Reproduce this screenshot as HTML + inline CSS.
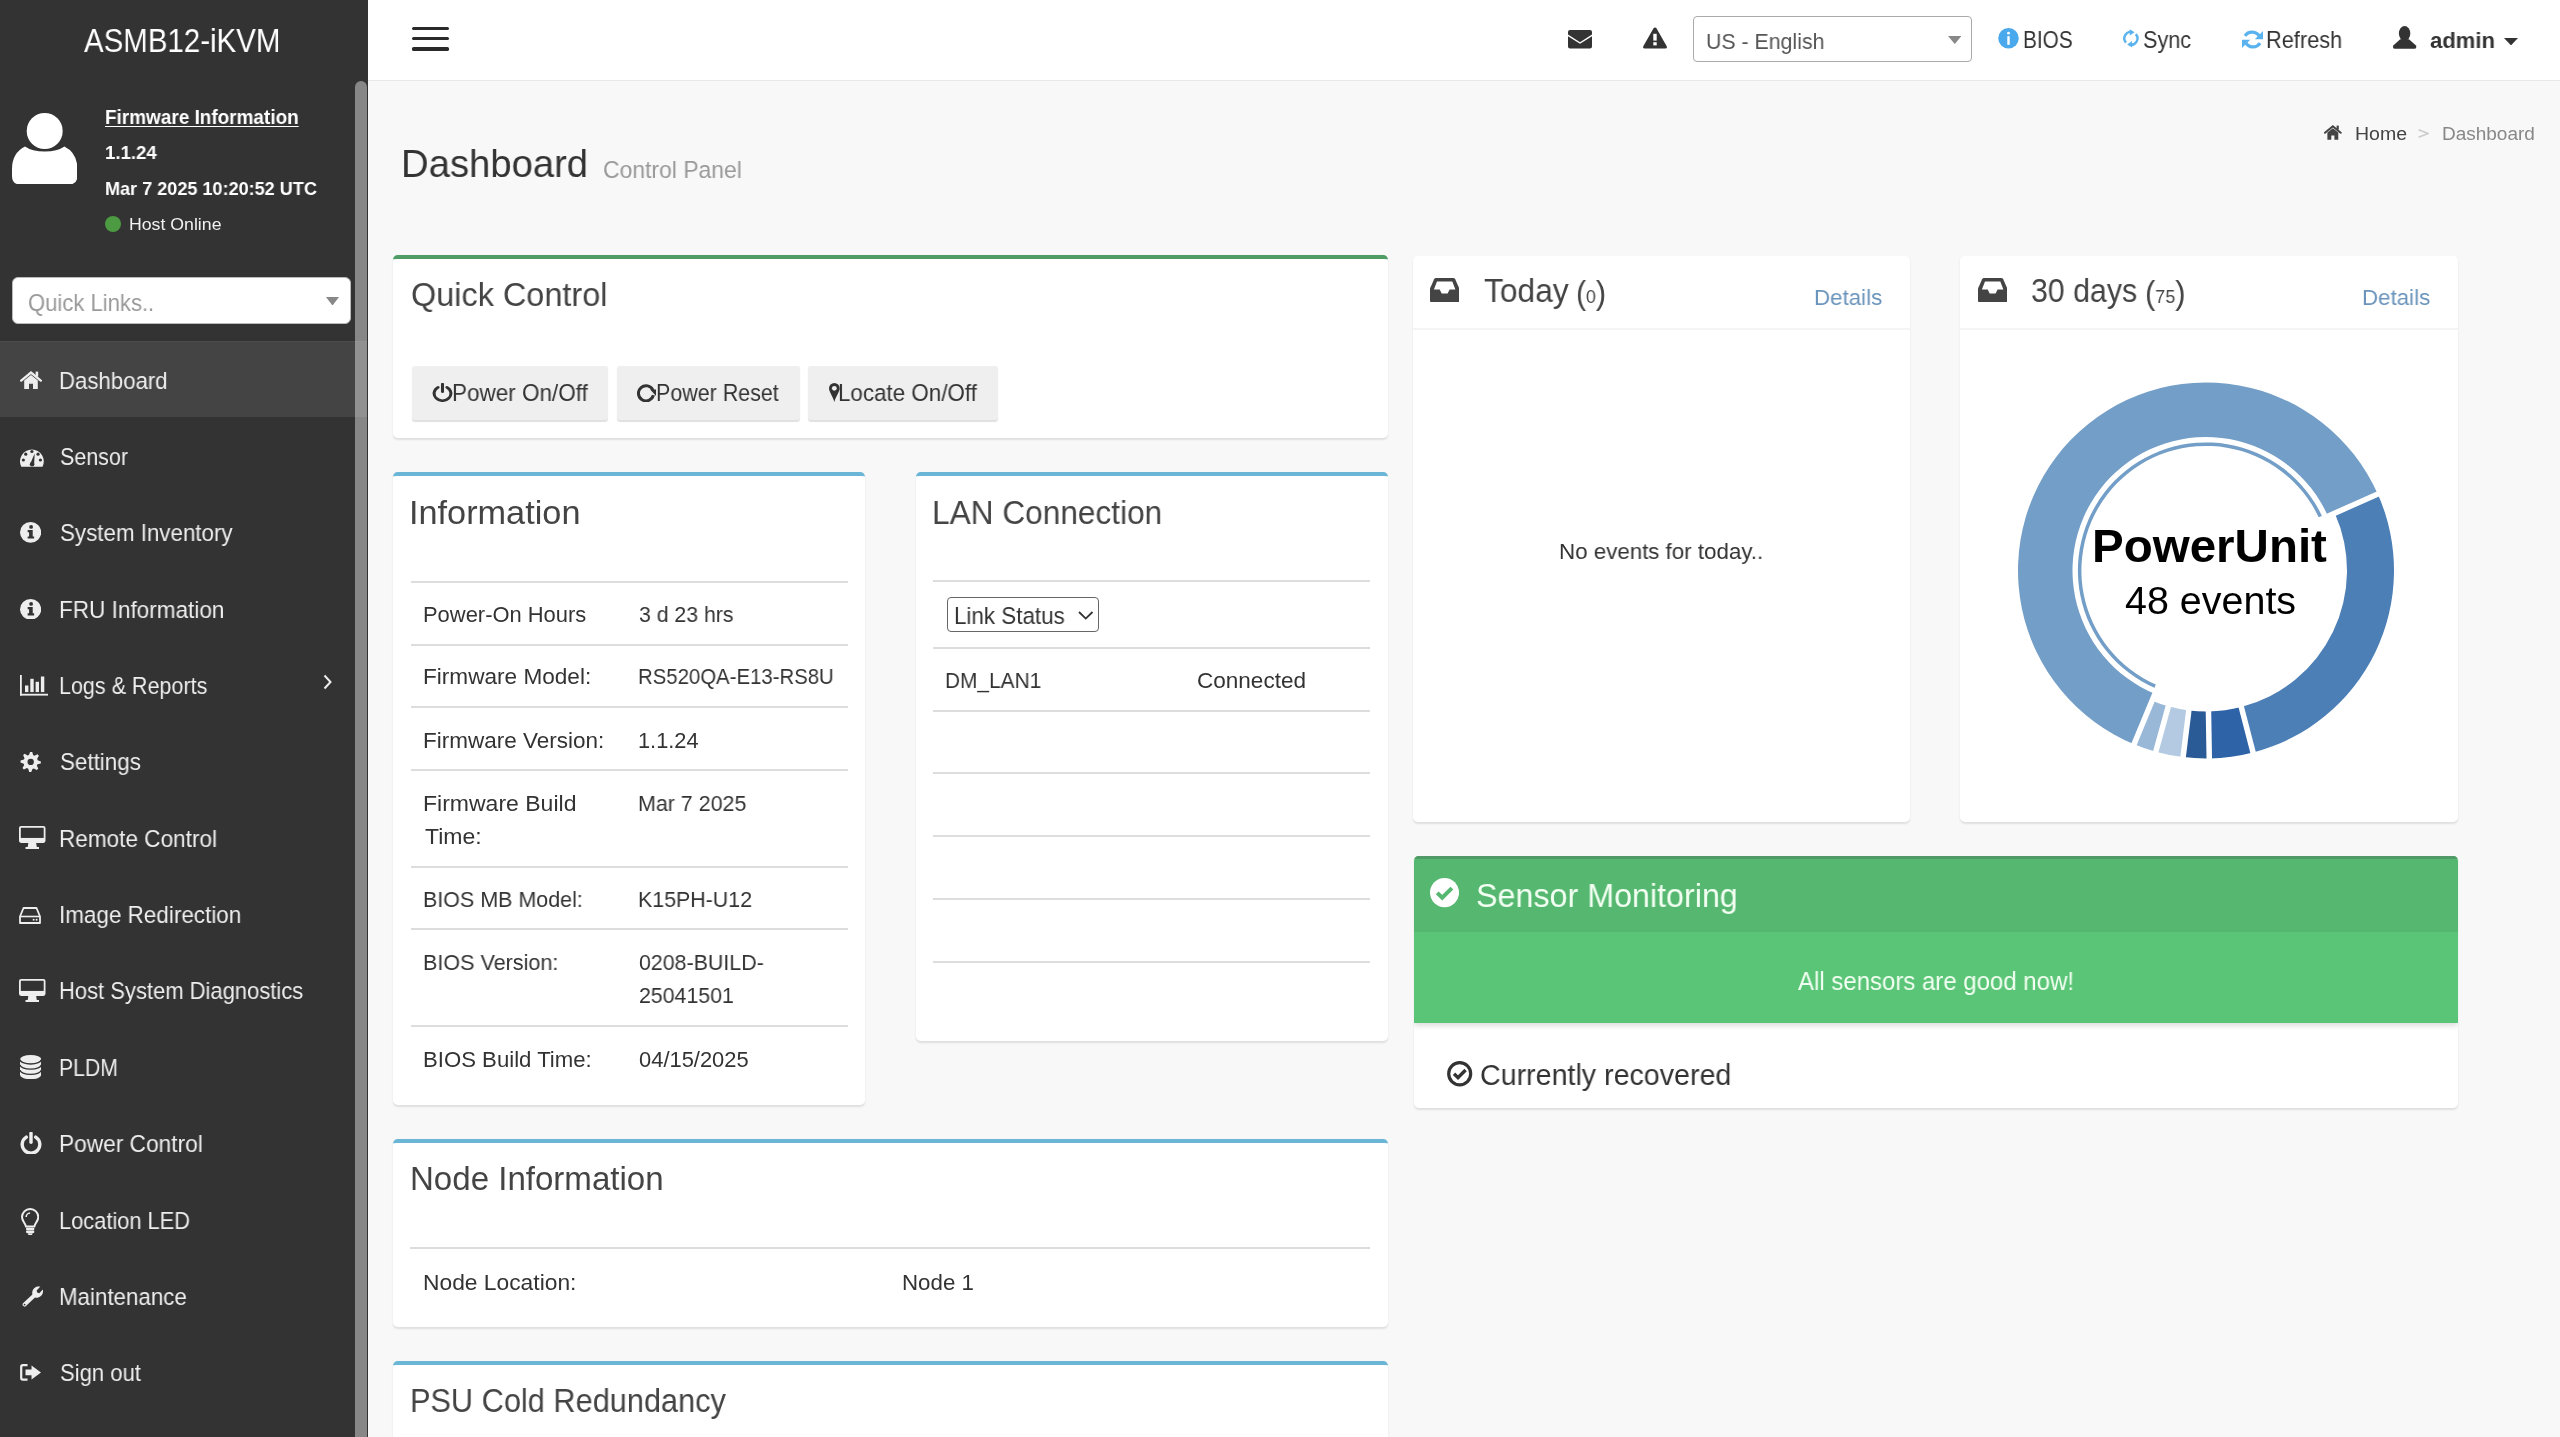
<!DOCTYPE html>
<html><head><meta charset="utf-8"><title>Dashboard</title>
<style>
html,body{margin:0;padding:0;}
body{width:2560px;height:1437px;overflow:hidden;position:relative;background:#f8f8f8;font-family:"Liberation Sans",sans-serif;}
.r{position:absolute;display:block;}
.t{position:absolute;white-space:nowrap;will-change:transform;}
</style></head><body>
<div class="r" style="left:0.00px;top:0.00px;width:368.00px;height:1437.00px;background:#333333;"></div>
<div class="r" style="left:0.00px;top:341.00px;width:366.50px;height:76.00px;background:#444444;"></div>
<div class="r" style="left:0.00px;top:341.00px;width:366.50px;height:1.20px;background:#4b4b4b;"></div>
<div class="r" style="left:354.80px;top:81.00px;width:12.40px;height:1356.00px;background:rgba(255,255,255,0.41);border-radius:6px 6px 0 0;"></div>
<div class="t " id="t0" style="left:84.20px;top:23.40px;font-size:34.01px;line-height:34.01px;color:#ffffff;font-weight:400;transform:scaleX(0.8661);transform-origin:0 0;">ASMB12-iKVM</div>
<svg class="r" style="left:11.90px;top:112.60px;width:65.40px;height:71.50px;" viewBox="0 0 65.4 71.5" preserveAspectRatio="none"><circle cx="32.7" cy="18" r="18" fill="#fff"/><path d="M13,33.5 Q20,38.5 32.7,38.5 Q45.4,38.5 52.4,33.5 Q65.4,40 65.4,56 L65.4,63 Q65.4,71.5 57,71.5 L8.4,71.5 Q0,71.5 0,63 L0,56 Q0,40 13,33.5 Z" fill="#fff"/></svg>
<div class="t " id="t1" style="left:104.60px;top:108.26px;font-size:19.77px;line-height:19.77px;color:#ffffff;font-weight:700;transform:scaleX(0.9585);transform-origin:0 0;text-decoration:underline;text-underline-offset:2px;text-decoration-thickness:1.3px;">Firmware Information</div>
<div class="t " id="t2" style="left:104.60px;top:144.40px;font-size:18.90px;line-height:18.90px;color:#ffffff;font-weight:700;transform:scaleX(0.9849);transform-origin:0 0;">1.1.24</div>
<div class="t " id="t3" style="left:104.60px;top:180.05px;font-size:18.60px;line-height:18.60px;color:#ffffff;font-weight:700;transform:scaleX(0.9717);transform-origin:0 0;">Mar 7 2025 10:20:52 UTC</div>
<div class="r" style="left:105px;top:216px;width:16px;height:16px;border-radius:50%;background:#4c9a41;"></div>
<div class="t " id="t4" style="left:129.40px;top:217.32px;font-size:16.86px;line-height:16.86px;color:#f2f2f2;font-weight:400;transform:scaleX(1.0498);transform-origin:0 0;">Host Online</div>
<div class="r" style="left:12px;top:277px;width:337px;height:45px;border-radius:6px;background:#fff;border:1px solid #bbb;"></div>
<div class="t " id="t5" style="left:27.60px;top:292.13px;font-size:23.11px;line-height:23.11px;color:#999999;font-weight:400;transform:scaleX(0.9542);transform-origin:0 0;">Quick Links..</div>
<svg class="r" style="left:325.90px;top:296.90px;width:13.00px;height:8.60px;" viewBox="0 0 13 8.6" preserveAspectRatio="none"><path d="M0,0 L13,0 L6.5,8.6 Z" fill="#888"/></svg>
<div class="t " id="t6" style="left:59.00px;top:369.51px;font-size:23.26px;line-height:23.26px;color:#eeeeee;font-weight:400;transform:scaleX(0.9546);transform-origin:0 0;">Dashboard</div>
<div class="t " id="t7" style="left:60.00px;top:445.88px;font-size:23.26px;line-height:23.26px;color:#eeeeee;font-weight:400;transform:scaleX(0.9237);transform-origin:0 0;">Sensor</div>
<div class="t " id="t8" style="left:60.00px;top:522.25px;font-size:23.26px;line-height:23.26px;color:#eeeeee;font-weight:400;transform:scaleX(0.9609);transform-origin:0 0;">System Inventory</div>
<div class="t " id="t9" style="left:59.00px;top:598.62px;font-size:23.26px;line-height:23.26px;color:#eeeeee;font-weight:400;transform:scaleX(0.9700);transform-origin:0 0;">FRU Information</div>
<div class="t " id="t10" style="left:59.00px;top:674.99px;font-size:23.26px;line-height:23.26px;color:#eeeeee;font-weight:400;transform:scaleX(0.9253);transform-origin:0 0;">Logs & Reports</div>
<div class="t " id="t11" style="left:60.00px;top:751.36px;font-size:23.26px;line-height:23.26px;color:#eeeeee;font-weight:400;transform:scaleX(0.9623);transform-origin:0 0;">Settings</div>
<div class="t " id="t12" style="left:59.00px;top:827.73px;font-size:23.26px;line-height:23.26px;color:#eeeeee;font-weight:400;transform:scaleX(0.9704);transform-origin:0 0;">Remote Control</div>
<div class="t " id="t13" style="left:59.00px;top:904.10px;font-size:23.26px;line-height:23.26px;color:#eeeeee;font-weight:400;transform:scaleX(0.9659);transform-origin:0 0;">Image Redirection</div>
<div class="t " id="t14" style="left:59.00px;top:980.47px;font-size:23.26px;line-height:23.26px;color:#eeeeee;font-weight:400;transform:scaleX(0.9450);transform-origin:0 0;">Host System Diagnostics</div>
<div class="t " id="t15" style="left:59.00px;top:1056.84px;font-size:23.26px;line-height:23.26px;color:#eeeeee;font-weight:400;transform:scaleX(0.9116);transform-origin:0 0;">PLDM</div>
<div class="t " id="t16" style="left:59.00px;top:1133.21px;font-size:23.26px;line-height:23.26px;color:#eeeeee;font-weight:400;transform:scaleX(0.9758);transform-origin:0 0;">Power Control</div>
<div class="t " id="t17" style="left:59.00px;top:1209.58px;font-size:23.26px;line-height:23.26px;color:#eeeeee;font-weight:400;transform:scaleX(0.9387);transform-origin:0 0;">Location LED</div>
<div class="t " id="t18" style="left:59.00px;top:1285.95px;font-size:23.26px;line-height:23.26px;color:#eeeeee;font-weight:400;transform:scaleX(0.9600);transform-origin:0 0;">Maintenance</div>
<div class="t " id="t19" style="left:60.00px;top:1362.32px;font-size:23.26px;line-height:23.26px;color:#eeeeee;font-weight:400;transform:scaleX(0.9489);transform-origin:0 0;">Sign out</div>
<svg class="r" style="left:20.20px;top:371.00px;width:22.00px;height:18.00px;" viewBox="0 0 22 18" preserveAspectRatio="none"><path d="M1.2,9.6 L11,1.6 L20.8,9.6" stroke="#eeeeee" stroke-width="2.4" fill="none" stroke-linecap="round"/><rect x="15.6" y="0.6" width="2.6" height="5" fill="#eeeeee"/><path d="M4.2,9.4 L11,4 L17.8,9.4 L17.8,18 L13,18 L13,12.8 L9,12.8 L9,18 L4.2,18 Z" fill="#eeeeee"/></svg>
<svg class="r" style="left:20.20px;top:448.00px;width:23.80px;height:18.70px;" viewBox="0 0 24 19" preserveAspectRatio="none"><path d="M1.3,19 A12,12 0 1 1 22.7,19 Z" fill="#eeeeee"/><circle cx="12" cy="3.6" r="1.6" fill="#333"/><circle cx="5.8" cy="6.3" r="1.6" fill="#333"/><circle cx="18.2" cy="6.3" r="1.6" fill="#333"/><circle cx="3.4" cy="12.2" r="1.6" fill="#333"/><circle cx="20.6" cy="12.2" r="1.6" fill="#333"/><path d="M10.2,16.2 L14.8,5.6 L14.2,17 Z" fill="#333"/><circle cx="12.2" cy="16.5" r="2.3" fill="#333"/></svg>
<svg class="r" style="left:19.90px;top:522.30px;width:21.20px;height:20.70px;" viewBox="0 0 21 21" preserveAspectRatio="none"><circle cx="10.5" cy="10.5" r="10.5" fill="#eeeeee"/><circle cx="11" cy="5" r="1.9" fill="#333"/><path d="M7.6,8.2 L12.6,8.2 L12.6,14.6 L14,14.6 L14,16.8 L7.6,16.8 L7.6,14.6 L9,14.6 L9,10.4 L7.6,10.4 Z" fill="#333"/></svg>
<svg class="r" style="left:19.90px;top:598.60px;width:21.20px;height:20.60px;" viewBox="0 0 21 21" preserveAspectRatio="none"><circle cx="10.5" cy="10.5" r="10.5" fill="#eeeeee"/><circle cx="11" cy="5" r="1.9" fill="#333"/><path d="M7.6,8.2 L12.6,8.2 L12.6,14.6 L14,14.6 L14,16.8 L7.6,16.8 L7.6,14.6 L9,14.6 L9,10.4 L7.6,10.4 Z" fill="#333"/></svg>
<svg class="r" style="left:19.90px;top:675.00px;width:28.20px;height:20.60px;" viewBox="0 0 28.2 20.6" preserveAspectRatio="none"><rect x="0" y="0" width="1.8" height="20.6" fill="#eeeeee"/><rect x="0" y="18.8" width="28.2" height="1.8" fill="#eeeeee"/><rect x="5" y="10.5" width="3.4" height="6.6" fill="#eeeeee"/><rect x="10.3" y="3.8" width="3.4" height="13.3" fill="#eeeeee"/><rect x="15.6" y="6.8" width="3.4" height="10.3" fill="#eeeeee"/><rect x="20.9" y="1.5" width="3.4" height="15.6" fill="#eeeeee"/></svg>
<svg class="r" style="left:323.00px;top:674.00px;width:9.00px;height:16.00px;" viewBox="0 0 9 16" preserveAspectRatio="none"><path d="M1.5,1.5 L7.5,8 L1.5,14.5" stroke="#eeeeee" stroke-width="2" fill="none"/></svg>
<svg class="r" style="left:19.90px;top:752.00px;width:21.40px;height:19.80px;" viewBox="0 0 21.4 19.8" preserveAspectRatio="none"><polygon points="10.20,-0.29 12.20,-0.19 13.13,3.12 14.40,3.72 17.55,2.34 18.89,3.82 17.21,6.82 17.68,8.15 20.89,9.40 20.79,11.40 17.48,12.33 16.88,13.60 18.26,16.75 16.78,18.09 13.78,16.41 12.45,16.88 11.20,20.09 9.20,19.99 8.27,16.68 7.00,16.08 3.85,17.46 2.51,15.98 4.19,12.98 3.72,11.65 0.51,10.40 0.61,8.40 3.92,7.47 4.52,6.20 3.14,3.05 4.62,1.71 7.62,3.39 8.95,2.92" fill="#eeeeee"/><circle cx="10.70" cy="9.90" r="3.20" fill="#333"/></svg>
<svg class="r" style="left:19.20px;top:825.70px;width:26.50px;height:22.90px;" viewBox="0 0 26.5 23" preserveAspectRatio="none"><rect x="0.9" y="0.9" width="24.7" height="15.2" rx="1.2" fill="none" stroke="#eeeeee" stroke-width="1.8"/><rect x="0.9" y="12" width="24.7" height="4" fill="#eeeeee"/><path d="M9.5,16 L17,16 L17.8,21 L20,21 L20,23 L6.5,23 L6.5,21 L8.7,21 Z" fill="#eeeeee"/></svg>
<svg class="r" style="left:19.20px;top:979.00px;width:26.50px;height:22.90px;" viewBox="0 0 26.5 23" preserveAspectRatio="none"><rect x="0.9" y="0.9" width="24.7" height="15.2" rx="1.2" fill="none" stroke="#eeeeee" stroke-width="1.8"/><rect x="0.9" y="12" width="24.7" height="4" fill="#eeeeee"/><path d="M9.5,16 L17,16 L17.8,21 L20,21 L20,23 L6.5,23 L6.5,21 L8.7,21 Z" fill="#eeeeee"/></svg>
<svg class="r" style="left:19.20px;top:907.00px;width:22.00px;height:17.00px;" viewBox="0 0 22 17" preserveAspectRatio="none"><path d="M4.5,1 L17.5,1 L21,9.5 L21,16 L1,16 L1,9.5 Z" fill="none" stroke="#eeeeee" stroke-width="1.8" stroke-linejoin="round"/><line x1="1" y1="9.5" x2="21" y2="9.5" stroke="#eeeeee" stroke-width="1.6"/><circle cx="14.6" cy="12.8" r="1" fill="#eeeeee"/><circle cx="17.6" cy="12.8" r="1" fill="#eeeeee"/></svg>
<svg class="r" style="left:20.00px;top:1055.00px;width:21.30px;height:24.20px;" viewBox="0 0 21.3 24.2" preserveAspectRatio="none"><path d="M0,4.4 A10.65,4.4 0 0 1 21.3,4.4 L21.3,19.8 A10.65,4.4 0 0 1 0,19.8 Z" fill="#eeeeee"/><path d="M0,4.6 A10.65,4.4 0 0 0 21.3,4.6 M0,9.8 A10.65,4.4 0 0 0 21.3,9.8 M0,15 A10.65,4.4 0 0 0 21.3,15" fill="none" stroke="#333" stroke-width="1.3"/></svg>
<svg class="r" style="left:19.60px;top:1131.80px;width:22.00px;height:22.70px;" viewBox="0 0 22 23" preserveAspectRatio="none"><path d="M6.3,5.2 A8.8,8.8 0 1 0 15.7,5.2" fill="none" stroke="#eeeeee" stroke-width="3.4" stroke-linecap="round"/><line x1="11" y1="1.3" x2="11" y2="10.5" stroke="#eeeeee" stroke-width="3.4" stroke-linecap="round"/></svg>
<svg class="r" style="left:20.60px;top:1207.70px;width:18.30px;height:27.50px;" viewBox="0 0 18.3 27.5" preserveAspectRatio="none"><path d="M9.15,1 A8.1,8.1 0 0 1 17.3,9.1 C17.3,13 14,15 13.3,18.5 L5,18.5 C4.3,15 1,13 1,9.1 A8.1,8.1 0 0 1 9.15,1 Z" fill="none" stroke="#eeeeee" stroke-width="2"/><path d="M5.2,9 A4,4 0 0 1 9.1,5" fill="none" stroke="#eeeeee" stroke-width="1.6"/><rect x="5" y="19.8" width="8.3" height="2.4" rx="1" fill="#eeeeee"/><rect x="5" y="22.6" width="8.3" height="2.4" rx="1" fill="#eeeeee"/><path d="M6.5,25.2 L11.8,25.2 Q11,27.5 9.15,27.5 Q7.3,27.5 6.5,25.2 Z" fill="#eeeeee"/></svg>
<svg class="r" style="left:20.60px;top:1286.00px;width:22.10px;height:21.50px;" viewBox="0 0 22.1 21.5" preserveAspectRatio="none"><path d="M2,17.2 L11.4,8.4 A6.5,6.5 0 0 1 19.4,0.6 L15.6,4.4 L16.2,6.6 L18.3,7.2 L21.8,3.6 A6.5,6.5 0 0 1 14,11.6 L4.7,20.3 A2.1,2.1 0 0 1 2,17.2 Z" fill="#eeeeee"/><circle cx="3.6" cy="18.6" r="0.9" fill="#333"/></svg>
<svg class="r" style="left:20.20px;top:1364.20px;width:21.05px;height:16.90px;" viewBox="0 0 21 17" preserveAspectRatio="none"><path d="M7.5,1.2 L2.8,1.2 Q1.2,1.2 1.2,2.8 L1.2,14.2 Q1.2,15.8 2.8,15.8 L7.5,15.8" fill="none" stroke="#eeeeee" stroke-width="2.2"/><path d="M5.5,5.6 L11.5,5.6 L11.5,1.5 L21,8.5 L11.5,15.5 L11.5,11.4 L5.5,11.4 Z" fill="#eeeeee"/></svg>
<div class="r" style="left:368.00px;top:0.00px;width:2192.00px;height:80.00px;background:#ffffff;"></div>
<div class="r" style="left:368.00px;top:80.00px;width:2192.00px;height:1.00px;background:#e8e8e8;"></div>
<div class="r" style="left:412.4px;top:27.2px;width:37px;height:3.2px;border-radius:1.6px;background:#2a2a2a;"></div>
<div class="r" style="left:412.4px;top:37.3px;width:37px;height:3.2px;border-radius:1.6px;background:#2a2a2a;"></div>
<div class="r" style="left:412.4px;top:47.4px;width:37px;height:3.2px;border-radius:1.6px;background:#2a2a2a;"></div>
<svg class="r" style="left:1568.00px;top:30.30px;width:24.00px;height:18.50px;" viewBox="0 0 24 18.5" preserveAspectRatio="none"><path d="M0,2 Q0,0 2,0 L22,0 Q24,0 24,2 L24,4.4 L12,12.2 L0,4.4 Z" fill="#333"/><path d="M0,6.2 L12,13.8 L24,6.2 L24,16.5 Q24,18.5 22,18.5 L2,18.5 Q0,18.5 0,16.5 Z" fill="#333"/></svg>
<svg class="r" style="left:1642.80px;top:27.30px;width:24.00px;height:21.50px;" viewBox="0 0 24 21.5" preserveAspectRatio="none"><path d="M12,0.5 Q13,0.5 13.6,1.5 L23.7,19.2 Q24.3,21.5 22.4,21.5 L1.6,21.5 Q-0.3,21.5 0.3,19.2 L10.4,1.5 Q11,0.5 12,0.5 Z" fill="#333"/><rect x="10.3" y="6.8" width="3.4" height="6.8" fill="#fff"/><rect x="10.3" y="15.2" width="3.4" height="3.2" fill="#fff"/></svg>
<div class="r" style="left:1693px;top:15.6px;width:277px;height:44.5px;border-radius:4px;background:#fff;border:1.6px solid #aaaaaa;"></div>
<div class="t " id="t20" style="left:1706.00px;top:30.60px;font-size:22.09px;line-height:22.09px;color:#555555;font-weight:400;transform:scaleX(0.9648);transform-origin:0 0;">US - English</div>
<svg class="r" style="left:1947.50px;top:36.00px;width:13.50px;height:8.00px;" viewBox="0 0 13.5 8" preserveAspectRatio="none"><path d="M0,0 L13.5,0 L6.75,8 Z" fill="#888"/></svg>
<svg class="r" style="left:1998.00px;top:28.30px;width:21.00px;height:20.50px;" viewBox="0 0 21 20.5" preserveAspectRatio="none"><circle cx="10.5" cy="10.25" r="10.25" fill="#4aa8ec"/><circle cx="10.5" cy="5.2" r="1.4" fill="#fff"/><rect x="9.3" y="8.2" width="2.4" height="8.6" fill="#fff"/></svg>
<div class="t " id="t21" style="left:2023.40px;top:28.73px;font-size:23.11px;line-height:23.11px;color:#333;font-weight:400;transform:scaleX(0.9004);transform-origin:0 0;">BIOS</div>
<svg class="r" style="left:2123.40px;top:29.30px;width:15.80px;height:18.70px;" viewBox="0 0 15.8 18.7" preserveAspectRatio="none"><path d="M9.6,3.2 A6.4,6.4 0 0 0 3.0,13.6" fill="none" stroke="#5ab3ee" stroke-width="2.4"/><path d="M6.6,0.2 L11.6,3.2 L6.8,6.6 Z" fill="#5ab3ee"/><path d="M6.2,15.5 A6.4,6.4 0 0 0 12.8,5.1" fill="none" stroke="#5ab3ee" stroke-width="2.4"/><path d="M9.2,18.5 L4.2,15.5 L9,12.1 Z" fill="#5ab3ee"/></svg>
<div class="t " id="t22" style="left:2143.00px;top:28.73px;font-size:23.11px;line-height:23.11px;color:#333;font-weight:400;transform:scaleX(0.9363);transform-origin:0 0;">Sync</div>
<svg class="r" style="left:2241.50px;top:29.50px;width:21.10px;height:19.00px;" viewBox="0 0 21 19" preserveAspectRatio="none"><path d="M17.4,6.6 A8.4,8.4 0 0 0 3,5.8" fill="none" stroke="#5ab3ee" stroke-width="3.2"/><path d="M21,1 L21,9.2 L12.8,9.2 Z" fill="#5ab3ee"/><path d="M3.6,12.4 A8.4,8.4 0 0 0 18,13.2" fill="none" stroke="#5ab3ee" stroke-width="3.2"/><path d="M0,18 L0,9.8 L8.2,9.8 Z" fill="#5ab3ee"/></svg>
<div class="t " id="t23" style="left:2266.00px;top:28.73px;font-size:23.11px;line-height:23.11px;color:#333;font-weight:400;transform:scaleX(0.9418);transform-origin:0 0;">Refresh</div>
<svg class="r" style="left:2392.40px;top:25.30px;width:25.30px;height:23.70px;" viewBox="0 0 25.3 23.7" preserveAspectRatio="none"><ellipse cx="12.6" cy="8.4" rx="5.7" ry="7.4" fill="#333"/><path d="M8.2,14.2 L17,14.2 L24,20.6 Q25,23.7 22.6,23.7 L2.7,23.7 Q0.3,23.7 1.3,20.6 Z" fill="#333"/></svg>
<div class="t " id="t24" style="left:2430.20px;top:29.85px;font-size:22.38px;line-height:22.38px;color:#333;font-weight:700;transform:scaleX(0.9861);transform-origin:0 0;">admin</div>
<svg class="r" style="left:2504.00px;top:38.00px;width:14.00px;height:7.40px;" viewBox="0 0 14 7.4" preserveAspectRatio="none"><path d="M0,0 L14,0 L7,7.4 Z" fill="#333"/></svg>
<div class="t " id="t25" style="left:401.40px;top:144.97px;font-size:38.66px;line-height:38.66px;color:#333333;font-weight:400;transform:scaleX(0.9895);transform-origin:0 0;">Dashboard</div>
<div class="t " id="t26" style="left:603.40px;top:157.51px;font-size:23.84px;line-height:23.84px;color:#999999;font-weight:400;transform:scaleX(0.9621);transform-origin:0 0;">Control Panel</div>
<svg class="r" style="left:2323.90px;top:125.20px;width:17.70px;height:14.80px;" viewBox="0 0 17.7 14.8" preserveAspectRatio="none"><path d="M1,7.8 L8.85,1.3 L16.7,7.8" stroke="#444" stroke-width="2" fill="none" stroke-linecap="round"/><rect x="12.6" y="0.6" width="2.2" height="4" fill="#444"/><path d="M3.4,7.6 L8.85,3.3 L14.3,7.6 L14.3,14.8 L10.4,14.8 L10.4,10.4 L7.3,10.4 L7.3,14.8 L3.4,14.8 Z" fill="#444"/></svg>
<div class="t " id="t27" style="left:2355.20px;top:124.62px;font-size:18.75px;line-height:18.75px;color:#444444;font-weight:400;transform:scaleX(1.0398);transform-origin:0 0;">Home</div>
<svg class="r" style="left:2418.30px;top:128.50px;width:10.70px;height:9.00px;" viewBox="0 0 10.7 9" preserveAspectRatio="none"><path d="M0.6,0.8 L10,4.5 L0.6,8.2" stroke="#cccccc" stroke-width="1.5" fill="none"/></svg>
<div class="t " id="t28" style="left:2441.60px;top:124.62px;font-size:18.75px;line-height:18.75px;color:#888888;font-weight:400;transform:scaleX(1.0124);transform-origin:0 0;">Dashboard</div>
<div class="r" style="left:393.00px;top:255.00px;width:995.00px;height:183.20px;background:#fff;border-radius:4.8px;box-shadow:0 1.6px 2px rgba(0,0,0,0.10);border-top:4.0px solid #4f9c64;box-sizing:border-box;"></div>
<div class="t " id="t29" style="left:411.40px;top:278.49px;font-size:33.43px;line-height:33.43px;color:#444444;font-weight:400;transform:scaleX(0.9704);transform-origin:0 0;">Quick Control</div>
<div class="r" style="left:412.40px;top:365.5px;width:195.40px;height:54px;background:#efefef;border-radius:3px;box-shadow:0 1.6px 1px rgba(0,0,0,0.12);"></div>
<div class="r" style="left:616.80px;top:365.5px;width:183.00px;height:54px;background:#efefef;border-radius:3px;box-shadow:0 1.6px 1px rgba(0,0,0,0.12);"></div>
<div class="r" style="left:808.20px;top:365.5px;width:189.80px;height:54px;background:#efefef;border-radius:3px;box-shadow:0 1.6px 1px rgba(0,0,0,0.12);"></div>
<svg class="r" style="left:432.00px;top:383.40px;width:21.00px;height:19.00px;" viewBox="0 0 22 23" preserveAspectRatio="none"><path d="M6.3,5.2 A8.8,8.8 0 1 0 15.7,5.2" fill="none" stroke="#333" stroke-width="3.2" stroke-linecap="round"/><line x1="11" y1="1.3" x2="11" y2="10.5" stroke="#333" stroke-width="3.2" stroke-linecap="round"/></svg>
<div class="t " id="t30" style="left:451.80px;top:382.43px;font-size:23.11px;line-height:23.11px;color:#333;font-weight:400;transform:scaleX(0.9726);transform-origin:0 0;">Power On/Off</div>
<svg class="r" style="left:636.60px;top:383.40px;width:19.40px;height:19.00px;" viewBox="0 0 19.4 19" preserveAspectRatio="none"><path d="M16,7.2 A7.6,7.6 0 1 0 16.4,12.2" fill="none" stroke="#333" stroke-width="3"/><path d="M13.2,6.6 L19.4,6.6 L19.4,13.4 Z" fill="#333"/></svg>
<div class="t " id="t31" style="left:656.00px;top:382.43px;font-size:23.11px;line-height:23.11px;color:#333;font-weight:400;transform:scaleX(0.9279);transform-origin:0 0;">Power Reset</div>
<svg class="r" style="left:828.90px;top:383.40px;width:10.70px;height:19.00px;" viewBox="0 0 10.7 19" preserveAspectRatio="none"><path d="M5.35,0 A5.35,5.35 0 0 1 10.7,5.35 C10.7,9 7,13 5.35,19 C3.7,13 0,9 0,5.35 A5.35,5.35 0 0 1 5.35,0 Z" fill="#333"/><circle cx="5.35" cy="5.35" r="2.4" fill="#efefef"/></svg>
<div class="t " id="t32" style="left:838.40px;top:382.43px;font-size:23.11px;line-height:23.11px;color:#333;font-weight:400;transform:scaleX(0.9683);transform-origin:0 0;">Locate On/Off</div>
<div class="r" style="left:393.00px;top:472.00px;width:472.30px;height:633.00px;background:#fff;border-radius:4.8px;box-shadow:0 1.6px 2px rgba(0,0,0,0.10);border-top:4.0px solid #6bb5d6;box-sizing:border-box;"></div>
<div class="t " id="t33" style="left:408.80px;top:495.99px;font-size:33.43px;line-height:33.43px;color:#444444;font-weight:400;transform:scaleX(1.0254);transform-origin:0 0;">Information</div>
<div class="r" style="left:410.60px;top:581.00px;width:437.80px;height:2.00px;background:#dddddd;"></div>
<div class="r" style="left:410.60px;top:644.00px;width:437.80px;height:2.00px;background:#dddddd;"></div>
<div class="r" style="left:410.60px;top:706.00px;width:437.80px;height:2.00px;background:#dddddd;"></div>
<div class="r" style="left:410.60px;top:769.00px;width:437.80px;height:2.00px;background:#dddddd;"></div>
<div class="r" style="left:410.60px;top:866.00px;width:437.80px;height:2.00px;background:#dddddd;"></div>
<div class="r" style="left:410.60px;top:928.00px;width:437.80px;height:2.00px;background:#dddddd;"></div>
<div class="r" style="left:410.60px;top:1025.00px;width:437.80px;height:2.00px;background:#dddddd;"></div>
<div class="t " id="t34" style="left:423.00px;top:603.94px;font-size:21.80px;line-height:21.80px;color:#333;font-weight:400;transform:scaleX(1.0056);transform-origin:0 0;">Power-On Hours</div>
<div class="t " id="t35" style="left:638.60px;top:603.94px;font-size:21.80px;line-height:21.80px;color:#333;font-weight:400;transform:scaleX(0.9747);transform-origin:0 0;">3 d 23 hrs</div>
<div class="t " id="t36" style="left:423.00px;top:666.34px;font-size:21.80px;line-height:21.80px;color:#333;font-weight:400;transform:scaleX(1.0366);transform-origin:0 0;">Firmware Model:</div>
<div class="t " id="t37" style="left:637.60px;top:666.34px;font-size:21.80px;line-height:21.80px;color:#333;font-weight:400;transform:scaleX(0.9341);transform-origin:0 0;">RS520QA-E13-RS8U</div>
<div class="t " id="t38" style="left:423.00px;top:729.74px;font-size:21.80px;line-height:21.80px;color:#333;font-weight:400;transform:scaleX(1.0320);transform-origin:0 0;">Firmware Version:</div>
<div class="t " id="t39" style="left:637.60px;top:729.74px;font-size:21.80px;line-height:21.80px;color:#333;font-weight:400;transform:scaleX(1.0000);transform-origin:0 0;">1.1.24</div>
<div class="t " id="t40" style="left:423.00px;top:792.84px;font-size:21.80px;line-height:21.80px;color:#333;font-weight:400;transform:scaleX(1.0556);transform-origin:0 0;">Firmware Build</div>
<div class="t " id="t41" style="left:637.60px;top:792.84px;font-size:21.80px;line-height:21.80px;color:#333;font-weight:400;transform:scaleX(0.9825);transform-origin:0 0;">Mar 7 2025</div>
<div class="t " id="t42" style="left:423.00px;top:889.34px;font-size:21.80px;line-height:21.80px;color:#333;font-weight:400;transform:scaleX(0.9842);transform-origin:0 0;">BIOS MB Model:</div>
<div class="t " id="t43" style="left:637.60px;top:889.34px;font-size:21.80px;line-height:21.80px;color:#333;font-weight:400;transform:scaleX(0.9804);transform-origin:0 0;">K15PH-U12</div>
<div class="t " id="t44" style="left:423.00px;top:951.84px;font-size:21.80px;line-height:21.80px;color:#333;font-weight:400;transform:scaleX(0.9890);transform-origin:0 0;">BIOS Version:</div>
<div class="t " id="t45" style="left:638.60px;top:951.84px;font-size:21.80px;line-height:21.80px;color:#333;font-weight:400;transform:scaleX(0.9808);transform-origin:0 0;">0208-BUILD-</div>
<div class="t " id="t46" style="left:423.00px;top:1048.64px;font-size:21.80px;line-height:21.80px;color:#333;font-weight:400;transform:scaleX(1.0167);transform-origin:0 0;">BIOS Build Time:</div>
<div class="t " id="t47" style="left:638.60px;top:1048.64px;font-size:21.80px;line-height:21.80px;color:#333;font-weight:400;transform:scaleX(1.0055);transform-origin:0 0;">04/15/2025</div>
<div class="t " id="t48" style="left:425.00px;top:826.14px;font-size:21.80px;line-height:21.80px;color:#333;font-weight:400;transform:scaleX(1.0560);transform-origin:0 0;">Time:</div>
<div class="t " id="t49" style="left:638.60px;top:984.84px;font-size:21.80px;line-height:21.80px;color:#333;font-weight:400;transform:scaleX(0.9789);transform-origin:0 0;">25041501</div>
<div class="r" style="left:915.50px;top:472.00px;width:472.50px;height:568.70px;background:#fff;border-radius:4.8px;box-shadow:0 1.6px 2px rgba(0,0,0,0.10);border-top:4.0px solid #6bb5d6;box-sizing:border-box;"></div>
<div class="t " id="t50" style="left:931.60px;top:496.51px;font-size:32.70px;line-height:32.70px;color:#444444;font-weight:400;transform:scaleX(0.9671);transform-origin:0 0;">LAN Connection</div>
<div class="r" style="left:933.30px;top:580.00px;width:437.10px;height:2.00px;background:#dddddd;"></div>
<div class="r" style="left:933.30px;top:647.00px;width:437.10px;height:2.00px;background:#dddddd;"></div>
<div class="r" style="left:933.30px;top:710.00px;width:437.10px;height:2.00px;background:#dddddd;"></div>
<div class="r" style="left:933.30px;top:772.00px;width:437.10px;height:2.00px;background:#dddddd;"></div>
<div class="r" style="left:933.30px;top:835.00px;width:437.10px;height:2.00px;background:#dddddd;"></div>
<div class="r" style="left:933.30px;top:898.00px;width:437.10px;height:2.00px;background:#dddddd;"></div>
<div class="r" style="left:933.30px;top:961.00px;width:437.10px;height:2.00px;background:#dddddd;"></div>
<div class="r" style="left:947.1px;top:596.7px;width:149.6px;height:33.2px;border:1.6px solid #666;border-radius:4px;background:#fff;"></div>
<div class="t " id="t51" style="left:954.40px;top:604.73px;font-size:23.11px;line-height:23.11px;color:#333;font-weight:400;transform:scaleX(0.9688);transform-origin:0 0;">Link Status</div>
<svg class="r" style="left:1078.00px;top:611.40px;width:15.50px;height:8.60px;" viewBox="0 0 15.5 8.6" preserveAspectRatio="none"><path d="M1,1 L7.75,7.6 L14.5,1" stroke="#333" stroke-width="1.8" fill="none"/></svg>
<div class="t " id="t52" style="left:945.00px;top:669.97px;font-size:22.24px;line-height:22.24px;color:#333;font-weight:400;transform:scaleX(0.9380);transform-origin:0 0;">DM_LAN1</div>
<div class="t " id="t53" style="left:1197.20px;top:669.97px;font-size:22.24px;line-height:22.24px;color:#333;font-weight:400;transform:scaleX(1.0133);transform-origin:0 0;">Connected</div>
<div class="r" style="left:393.00px;top:1139.00px;width:995.00px;height:188.20px;background:#fff;border-radius:4.8px;box-shadow:0 1.6px 2px rgba(0,0,0,0.10);border-top:4.0px solid #6bb5d6;box-sizing:border-box;"></div>
<div class="t " id="t54" style="left:409.80px;top:1162.91px;font-size:32.70px;line-height:32.70px;color:#444444;font-weight:400;transform:scaleX(1.0114);transform-origin:0 0;">Node Information</div>
<div class="r" style="left:410.00px;top:1247.00px;width:960.00px;height:2.00px;background:#dddddd;"></div>
<div class="t " id="t55" style="left:422.80px;top:1271.64px;font-size:21.80px;line-height:21.80px;color:#333;font-weight:400;transform:scaleX(1.0462);transform-origin:0 0;">Node Location:</div>
<div class="t " id="t56" style="left:902.20px;top:1271.64px;font-size:21.80px;line-height:21.80px;color:#333;font-weight:400;transform:scaleX(1.0227);transform-origin:0 0;">Node 1</div>
<div class="r" style="left:393.00px;top:1361.00px;width:995.00px;height:139.00px;background:#fff;border-radius:4.8px;box-shadow:0 1.6px 2px rgba(0,0,0,0.10);border-top:4.0px solid #6bb5d6;box-sizing:border-box;"></div>
<div class="t " id="t57" style="left:410.40px;top:1385.41px;font-size:32.70px;line-height:32.70px;color:#444444;font-weight:400;transform:scaleX(0.9397);transform-origin:0 0;">PSU Cold Redundancy</div>
<div class="r" style="left:1412.60px;top:255.60px;width:497.70px;height:566.40px;background:#fff;border-radius:4.8px;box-shadow:0 1.6px 2px rgba(0,0,0,0.10);"></div>
<div class="r" style="left:1412.60px;top:328.00px;width:497.70px;height:1.60px;background:#f4f4f4;"></div>
<svg class="r" style="left:1430.00px;top:277.50px;width:29.30px;height:24.40px;" viewBox="0 0 29.3 24.4" preserveAspectRatio="none"><path d="M6,0 L23.3,0 Q24.6,0 25.2,1.2 L29.3,10.5 L29.3,22.4 Q29.3,24.4 27.3,24.4 L2,24.4 Q0,24.4 0,22.4 L0,10.5 L4.1,1.2 Q4.7,0 6,0 Z" fill="#444"/><path d="M7,3.6 L22.3,3.6 L25.4,11.6 L19.6,11.6 L17.6,15.6 L11.7,15.6 L9.7,11.6 L3.9,11.6 Z" fill="#fff"/></svg>
<div class="t " id="t58" style="left:1484.20px;top:275.13px;font-size:32.56px;line-height:32.56px;color:#444444;font-weight:400;transform:scaleX(0.9757);transform-origin:0 0;">Today</div>
<div class="t " id="t59" style="left:1576.00px;top:277.23px;font-size:32.56px;line-height:32.56px;color:#444444;font-weight:400;transform:scaleX(0.9286);transform-origin:0 0;">(<span style="font-size:19px;vertical-align:1px">0</span>)</div>
<div class="t " id="t60" style="left:1814.20px;top:285.91px;font-size:22.67px;line-height:22.67px;color:#6a94bb;font-weight:400;transform:scaleX(0.9851);transform-origin:0 0;">Details</div>
<div class="t " id="t61" style="left:1558.80px;top:540.53px;font-size:22.46px;line-height:22.46px;color:#333;font-weight:400;transform:scaleX(0.9936);transform-origin:0 0;">No events for today..</div>
<div class="r" style="left:1960.20px;top:255.60px;width:497.60px;height:566.40px;background:#fff;border-radius:4.8px;box-shadow:0 1.6px 2px rgba(0,0,0,0.10);"></div>
<div class="r" style="left:1960.20px;top:328.00px;width:497.60px;height:1.60px;background:#f4f4f4;"></div>
<svg class="r" style="left:1978.00px;top:277.50px;width:29.30px;height:24.40px;" viewBox="0 0 29.3 24.4" preserveAspectRatio="none"><path d="M6,0 L23.3,0 Q24.6,0 25.2,1.2 L29.3,10.5 L29.3,22.4 Q29.3,24.4 27.3,24.4 L2,24.4 Q0,24.4 0,22.4 L0,10.5 L4.1,1.2 Q4.7,0 6,0 Z" fill="#444"/><path d="M7,3.6 L22.3,3.6 L25.4,11.6 L19.6,11.6 L17.6,15.6 L11.7,15.6 L9.7,11.6 L3.9,11.6 Z" fill="#fff"/></svg>
<div class="t " id="t62" style="left:2031.40px;top:275.13px;font-size:32.56px;line-height:32.56px;color:#444444;font-weight:400;transform:scaleX(0.9311);transform-origin:0 0;">30 days</div>
<div class="t " id="t63" style="left:2144.80px;top:277.23px;font-size:32.56px;line-height:32.56px;color:#444444;font-weight:400;transform:scaleX(0.9456);transform-origin:0 0;">(<span style="font-size:19px;vertical-align:1px">75</span>)</div>
<div class="t " id="t64" style="left:2362.20px;top:285.91px;font-size:22.67px;line-height:22.67px;color:#6a94bb;font-weight:400;transform:scaleX(0.9851);transform-origin:0 0;">Details</div>
<svg class="r" style="left:2010px;top:375px;width:392px;height:391px;" viewBox="2010 375 392 391"><path d="M2134.06,744.19 A188.00,188.00 0 1 1 2377.75,494.03 L2327.96,516.20 A133.50,133.50 0 1 0 2154.91,693.84 Z" fill="#739ec7"/><path d="M2377.75,494.03 A188.00,188.00 0 0 1 2253.07,752.51 L2241.30,707.01 A141.00,141.00 0 0 0 2334.81,513.15 Z" fill="#4b7fb6"/><path d="M2253.07,752.51 A188.00,188.00 0 0 1 2209.28,758.47 L2208.46,711.48 A141.00,141.00 0 0 0 2241.30,707.01 Z" fill="#2e63a7"/><path d="M2209.28,758.47 A188.00,188.00 0 0 1 2183.09,757.10 L2188.82,710.45 A141.00,141.00 0 0 0 2208.46,711.48 Z" fill="#2b5b97"/><path d="M2183.09,757.10 A188.00,188.00 0 0 1 2155.76,751.66 L2168.32,706.37 A141.00,141.00 0 0 0 2188.82,710.45 Z" fill="#b3cae2"/><path d="M2155.76,751.66 A188.00,188.00 0 0 1 2134.06,744.19 L2152.04,700.77 A141.00,141.00 0 0 0 2168.32,706.37 Z" fill="#99b7d7"/><path d="M2154.92,687.98 A128.10,128.10 0 1 1 2322.10,516.36 L2318.93,517.84 A124.60,124.60 0 1 0 2156.32,684.77 Z" fill="#739ec7"/><line x1="2311.06" y1="523.73" x2="2384.14" y2="491.19" stroke="#fff" stroke-width="5.5"/><line x1="2234.79" y1="681.84" x2="2254.82" y2="759.29" stroke="#fff" stroke-width="5.5"/><line x1="2208.01" y1="685.48" x2="2209.40" y2="765.47" stroke="#fff" stroke-width="5.5"/><line x1="2191.99" y1="684.64" x2="2182.24" y2="764.05" stroke="#fff" stroke-width="5.5"/><line x1="2175.27" y1="681.32" x2="2153.89" y2="758.41" stroke="#fff" stroke-width="5.5"/><line x1="2161.99" y1="676.75" x2="2131.38" y2="750.66" stroke="#fff" stroke-width="5.5"/></svg>
<div class="t " id="t65" style="left:2091.80px;top:523.26px;font-size:46.70px;line-height:46.70px;color:#000;font-weight:700;transform:scaleX(1.0176);transform-origin:0 0;">PowerUnit</div>
<div class="t " id="t66" style="left:2124.60px;top:582.35px;font-size:38.80px;line-height:38.80px;color:#000;font-weight:400;transform:scaleX(1.0169);transform-origin:0 0;">48 events</div>
<div class="r" style="left:1413.5px;top:856.3px;width:1044.5px;height:251.8px;background:#fff;border-radius:4.8px;box-shadow:0 1.6px 2px rgba(0,0,0,0.10);overflow:hidden;"><div style="position:absolute;left:0;top:0;right:0;height:76px;background:#56b870;border-top:3px solid #4f9a66;box-sizing:border-box;"></div><div style="position:absolute;left:0;top:76px;right:0;height:91px;background:#5bc577;box-shadow:0 3px 5px rgba(0,0,0,0.13);"></div></div>
<svg class="r" style="left:1430.40px;top:878.40px;width:29.10px;height:29.20px;" viewBox="0 0 29 29" preserveAspectRatio="none"><circle cx="14.5" cy="14.5" r="14.5" fill="#fff"/><path d="M7.2,14.8 L12.2,19.6 L21.8,10" stroke="#56b870" stroke-width="4" fill="none"/></svg>
<div class="t " id="t67" style="left:1476.20px;top:880.11px;font-size:32.70px;line-height:32.70px;color:#f2fff2;font-weight:400;transform:scaleX(0.9868);transform-origin:0 0;">Sensor Monitoring</div>
<div class="t " id="t68" style="left:1797.80px;top:968.63px;font-size:25.00px;line-height:25.00px;color:#f2fff2;font-weight:400;transform:scaleX(0.9594);transform-origin:0 0;">All sensors are good now!</div>
<svg class="r" style="left:1447.30px;top:1061.00px;width:25.40px;height:25.50px;" viewBox="0 0 25.4 25.4" preserveAspectRatio="none"><circle cx="12.7" cy="12.7" r="11" fill="none" stroke="#333" stroke-width="3.2"/><path d="M7,12.8 L11,16.6 L18.6,9" stroke="#333" stroke-width="3.4" fill="none"/></svg>
<div class="t " id="t69" style="left:1479.80px;top:1060.79px;font-size:29.07px;line-height:29.07px;color:#333;font-weight:400;transform:scaleX(0.9849);transform-origin:0 0;">Currently recovered</div>
</body></html>
